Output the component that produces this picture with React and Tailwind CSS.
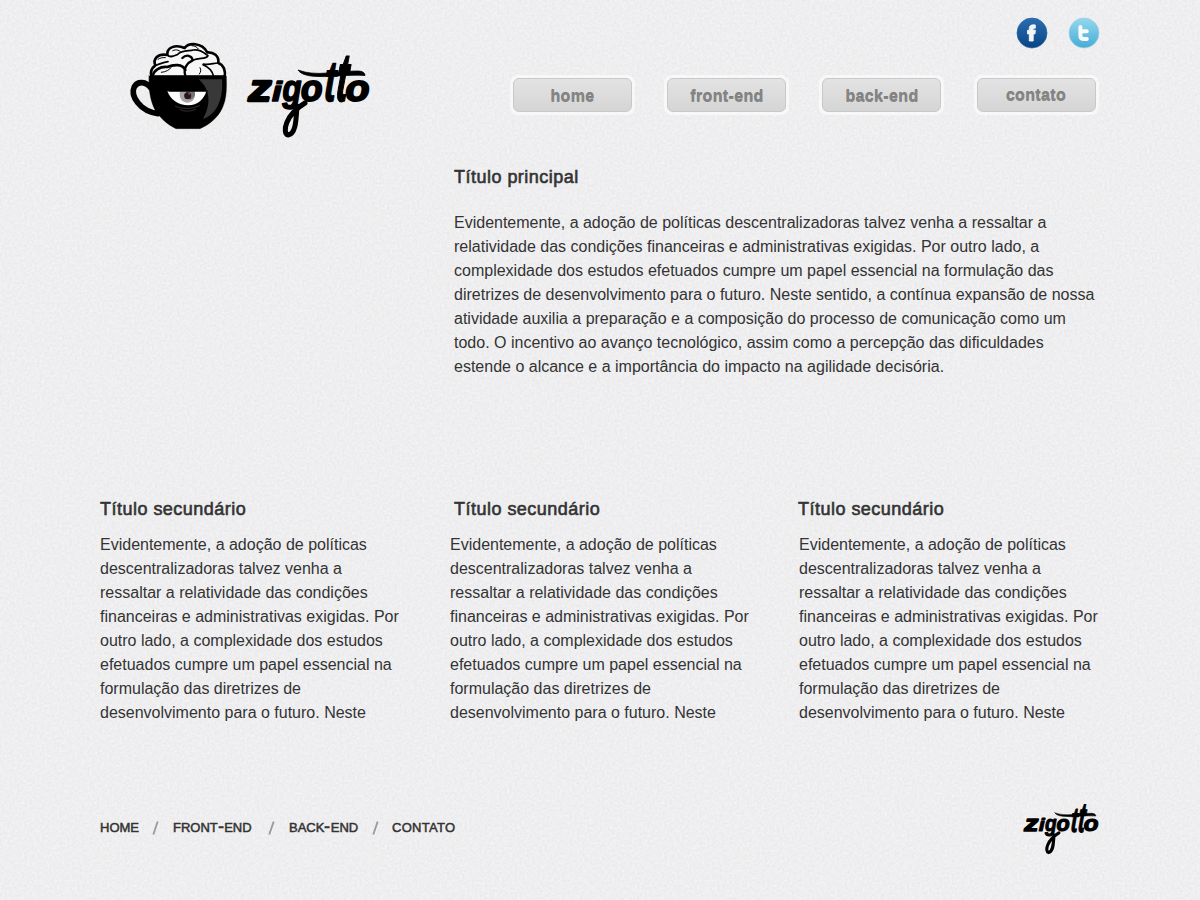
const bodyLines = [
  'Evidentemente, a adoção de políticas descentralizadoras talvez venha a ressaltar a',
  'relatividade das condições financeiras e administrativas exigidas. Por outro lado, a',
  'complexidade dos estudos efetuados cumpre um papel essencial na formulação das',
  'diretrizes de desenvolvimento para o futuro. Neste sentido, a contínua expansão de nossa',
  'atividade auxilia a preparação e a composição do processo de comunicação como um',
  'todo. O incentivo ao avanço tecnológico, assim como a percepção das dificuldades',
  'estende o alcance e a importância do impacto na agilidade decisória.',
];

const columnLines = [
  'Evidentemente, a adoção de políticas',
  'descentralizadoras talvez venha a',
  'ressaltar a relatividade das condições',
  'financeiras e administrativas exigidas. Por',
  'outro lado, a complexidade dos estudos',
  'efetuados cumpre um papel essencial na',
  'formulação das diretrizes de',
  'desenvolvimento para o futuro. Neste',
];

function Paper() {
  return (
    <svg className="absolute inset-0 h-full w-full" aria-hidden="true">
      <filter id="grain" x="0" y="0" width="100%" height="100%" colorInterpolationFilters="sRGB">
        <feTurbulence type="fractalNoise" baseFrequency="0.4" numOctaves="2" seed="4" stitchTiles="stitch" />
        <feColorMatrix values="0.065 0 0 0 0.902  0.065 0 0 0 0.902  0.065 0 0 0 0.908  0 0 0 0 1" />
      </filter>
      <rect width="100%" height="100%" filter="url(#grain)" />
    </svg>
  );
}

function Wordmark({ className }) {
  return (
    <svg viewBox="0 0 140 110" className={className} fill="#000" stroke="#000">
      <g fontFamily="Liberation Sans, Arial, sans-serif" fontWeight="700" fontStyle="italic" fontSize="37" strokeWidth="1.6" strokeLinejoin="round">
        <text transform="translate(8.5 60.5) scale(1.24 .98)" strokeWidth="2.4">z</text>
        <text transform="translate(32 60.5) scale(.95 .77)" strokeWidth="2">i</text>
        <text transform="translate(42.5 60.5) scale(.84 1)">g</text>
        <text transform="translate(61 60.5) scale(.95 1)" strokeWidth="2">o</text>
        <text transform="translate(83.5 61) skewX(-3) scale(.95 1.55)" strokeWidth="1">t</text>
        <text transform="translate(95 61) skewX(-5) scale(.95 1.85)" strokeWidth="1">t</text>
        <text transform="translate(105.5 60.5) scale(1.06 1)" strokeWidth="2">o</text>
      </g>
      <path d="M57 66C56 80 56 94 48 95C42 93 45 75 65 63" fill="none" strokeWidth="5" strokeLinecap="round" />
      <path d="M58 30C76 37 96 31 117 31C123 31 125 33 125 35.5C107 34 89 38 71 36C64 35 60 33 58 30Z" strokeWidth=".8" strokeLinejoin="round" />
    </svg>
  );
}

function Cup() {
  return (
    <svg viewBox="0 0 390 330" className="h-[110px] w-[130px]" stroke="#000" strokeLinecap="round" strokeLinejoin="round">
      <g fill="#f7f7f7" strokeWidth="8">
        <path d="M94 140C90 124 98 112 106 106C98 88 112 70 142 75C140 52 166 42 194 54C206 38 244 36 262 67C280 66 298 76 295 99C312 105 317 124 314 140Z" />
        <path d="M196 137C188 114 204 97 218 91C216 75 198 73 187 84" fill="none" strokeWidth="7" />
        <path d="M196 120C188 100 158 104 142 111C119 109 102 121 98 137" fill="none" strokeWidth="8" />
        <path d="M106 106C116 104 130 96 144 95M142 75C149 84 160 79 172 74C184 59 210 64 220 60C244 57 254 71 264 77M218 91C238 83 256 87 263 79" fill="none" strokeWidth="5" />
        <path d="M295 99C282 98 270 106 250 102M249 104C268 112 277 123 280 137" fill="none" strokeWidth="5" />
      </g>
      <path d="M114 88C121 83 130 82 136 83M158 62C169 56 181 62 184 68M216 47C225 47 232 52 235 57M124 127C138 126 149 119 153 113M238 132C243 126 244 119 240 113" fill="none" strokeWidth="3" />
      <path d="M93 174C78 154 54 152 43 170C30 198 60 244 114 251" fill="none" strokeWidth="17" />
      <path d="M87 138H319C320 172 321 206 306 236C294 262 268 284 240 296H168C143 284 117 262 103 236C90 209 85 170 87 138Z" strokeWidth="1" />
      <path d="M236 148H306C308 179 304 209 292 230C281 249 265 261 249 267C270 230 276 182 236 148Z" fill="#383838" stroke="none" />
      <path d="M142 183H259C253 207 232 226 205 226C175 225 150 209 142 183Z" fill="#fff" stroke="none" />
      <path d="M180 184H224C229 201 219 219 202 218C184 217 176 202 180 184Z" fill="#a9a6a8" stroke="none" />
      <path d="M198 184H224C228 198 219 207 211 209L202 204Z" fill="#777274" stroke="none" />
      <circle cx="203" cy="197" r="10.5" fill="#271716" stroke="none" />
      <circle cx="208" cy="191" r="3" fill="#735b57" stroke="none" />
      <path d="M166 229Q202 244 239 227M180 239Q204 249 227 238" fill="none" stroke="#5c5c5c" strokeWidth="1.6" />
      <path d="M139 181L150 183H261" fill="none" strokeWidth="4" />
    </svg>
  );
}

function Facebook() {
  return (
    <svg viewBox="0 0 32 32" className="size-8">
      <defs>
        <linearGradient id="fb" x1="0" y1="0" x2="0" y2="1">
          <stop stopColor="#2b6db1" />
          <stop offset="1" stopColor="#084584" />
        </linearGradient>
      </defs>
      <circle cx="16" cy="16" r="15" fill="url(#fb)" stroke="#2864a3" strokeWidth=".7" />
      <path d="M13.3 24V16.9H11.5V13.3H13.3V11.7C13.3 8.4 15.2 7.5 19.3 8V11.3C17.8 11.1 17.2 11.3 17.2 12.4V13.3H19.4L19 16.9H17.2V24Z" fill="#f4f5f5" stroke="#f4f5f5" strokeWidth=".9" strokeLinejoin="round" />
    </svg>
  );
}

function Twitter() {
  return (
    <svg viewBox="0 0 32 32" className="size-8">
      <defs>
        <linearGradient id="tw" x1="0" y1="0" x2="0" y2="1">
          <stop stopColor="#94d8ef" />
          <stop offset="1" stopColor="#45acd6" />
        </linearGradient>
      </defs>
      <circle cx="16" cy="16" r="15" fill="url(#tw)" stroke="#a5cddd" strokeWidth=".7" />
      <path d="M12.4 10V18.4Q12.4 21.9 16 21.9H18.8M12.8 14.3H18.8" fill="none" stroke="#fafafa" strokeWidth="4" strokeLinecap="round" strokeLinejoin="round" />
    </svg>
  );
}

function NavButton({ label, className = '' }) {
  return (
    <a className="block h-10 w-[125px] rounded-[8px] bg-white/55 p-[3px]">
      <span className={`flex h-[34px] items-center justify-center rounded-[6px] border border-[#c9c9c9] bg-linear-to-b from-[#e3e3e3] to-[#d5d5d5] text-[16px] font-bold tracking-[0.35px] text-[#858585] [text-shadow:0_-1px_0_#7c7c7c] ${className}`}>
        {label}
      </span>
    </a>
  );
}

function Lines({ lines }) {
  return (
    <p className="text-[16px] leading-6">
      {lines.map((line) => (
        <span key={line} className="block whitespace-nowrap">{line}</span>
      ))}
    </p>
  );
}

function Title({ children, className = '' }) {
  return (
    <h2 className={`text-[18px] leading-6 tracking-[0.48px] [-webkit-text-stroke:0.6px_#333] ${className}`}>{children}</h2>
  );
}

function Slash() {
  return (
    <svg viewBox="0 0 8 14" className="h-[14px] w-2">
      <path d="M5.7 0.5L1.3 13.5" stroke="#999" strokeWidth="1.8" />
    </svg>
  );
}

function Hyphen() {
  return <span className="relative -top-px inline-block origin-center scale-x-130 px-[1px] font-bold">-</span>;
}

export default function App() {
  return (
    <div className="relative h-[900px] w-[1200px] overflow-hidden bg-[#eeeeef] font-['Liberation_Sans',Arial,sans-serif] text-[#333]">
      <Paper />
      <div className="relative flex h-full flex-col">
        <header className="flex h-[165px] justify-between pr-[101px] pl-[120px]">
          <div className="flex pt-[30px]">
            <Cup />
            <Wordmark className="mt-[10px] -ml-[10px] h-[110px] w-[140px]" />
          </div>
          <div className="flex flex-col items-end pt-[17px]">
            <div className="-mr-px flex gap-5">
              <Facebook />
              <Twitter />
            </div>
            <nav className="mt-[26px] grid grid-cols-[154px_155px_155px_125px]">
              <NavButton label="home" className="pt-[3px]" />
              <NavButton label="front-end" className="pt-[3px] pl-px" />
              <NavButton label="back-end" className="pt-[3px] pl-px" />
              <NavButton label="contato" className="pt-px pr-px" />
            </nav>
          </div>
        </header>

        <main>
          <section className="h-[332px] pl-[454px]">
            <Title className="mb-[22px]">Título principal</Title>
            <Lines lines={bodyLines} />
          </section>
          <section className="grid grid-cols-[350px_349px_301px] pl-[100px]">
            <div>
              <Title className="mb-3">Título secundário</Title>
              <Lines lines={columnLines} />
            </div>
            <div>
              <Title className="mb-3 pl-1">Título secundário</Title>
              <Lines lines={columnLines} />
            </div>
            <div>
              <Title className="mb-3 -ml-px">Título secundário</Title>
              <Lines lines={columnLines} />
            </div>
          </section>
        </main>

        <footer className="mt-[69px] flex justify-between pr-[95px] pl-[100px]">
          <nav className="mt-[26px] grid h-4 grid-cols-[52px_21px_95px_21px_83px_20px_auto] items-center text-[13px] leading-4 [-webkit-text-stroke:0.5px_#333]">
            <a>HOME</a>
            <Slash />
            <a>FRONT<Hyphen />END</a>
            <Slash />
            <a>BACK<Hyphen />END</a>
            <Slash />
            <a className="tracking-[0.3px]">CONTATO</a>
          </nav>
          <Wordmark className="h-[68px] w-[86px]" />
        </footer>
      </div>
    </div>
  );
}
